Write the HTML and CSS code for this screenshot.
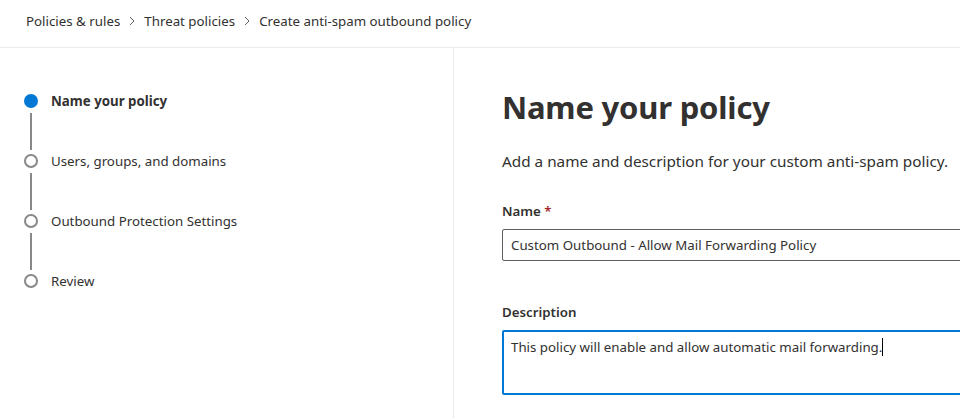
FILE: index.html
```html
<!DOCTYPE html>
<html>
<head>
<meta charset="utf-8">
<link rel="stylesheet" href="styles.css">
</head>
<body>
<header class="topbar">
  <nav class="crumbs">
    <span class="crumb">Policies &amp; rules</span>
    <svg class="chev" width="8" height="10" viewBox="0 0 8 10"><path d="M2 1l4 4-4 4" fill="none" stroke="#605e5c" stroke-width="1"/></svg>
    <span class="crumb">Threat policies</span>
    <svg class="chev" width="8" height="10" viewBox="0 0 8 10"><path d="M2 1l4 4-4 4" fill="none" stroke="#605e5c" stroke-width="1"/></svg>
    <span class="crumb current">Create anti-spam outbound policy</span>
  </nav>
</header>
<main class="layout">
  <aside class="steps">
    <div class="step active">
      <div class="marker"><span class="dot"></span><span class="rail"></span></div>
      <span class="step-label">Name your policy</span>
    </div>
    <div class="step">
      <div class="marker"><span class="dot"></span><span class="rail"></span></div>
      <span class="step-label">Users, groups, and domains</span>
    </div>
    <div class="step">
      <div class="marker"><span class="dot"></span><span class="rail"></span></div>
      <span class="step-label">Outbound Protection Settings</span>
    </div>
    <div class="step last">
      <div class="marker"><span class="dot"></span></div>
      <span class="step-label">Review</span>
    </div>
  </aside>
  <section class="content">
    <h1 class="title">Name your policy</h1>
    <p class="subtitle">Add a name and description for your custom anti-spam policy.</p>
    <label class="field-label">Name <span class="req">*</span></label>
    <div class="input">Custom Outbound - Allow Mail Forwarding Policy</div>
    <label class="field-label desc-label">Description</label>
    <div class="textarea">This policy will enable and allow automatic mail forwarding.<span class="caret"></span></div>
  </section>
</main>
</body>
</html>
```
FILE: styles.css
```css
* { box-sizing: border-box; }
html, body { margin: 0; padding: 0; }
body {
  width: 960px;
  height: 418px;
  overflow: hidden;
  background: #ffffff;
  font-family: "Noto Sans", "Open Sans", sans-serif;
  color: #323130;
}
.topbar {
  height: 48px;
  border-bottom: 1px solid #edebe9;
  display: flex;
  align-items: center;
  padding-left: 26px;
}
.crumbs {
  display: flex;
  align-items: center;
  gap: 8px;
  font-size: 13.3px;
  margin-top: -6px;
}
.crumb { color: #323130; }
.chev { display: block; }
.layout {
  display: flex;
  height: 370px;
}
.steps {
  width: 454px;
  flex: none;
  border-right: 1px solid #edebe9;
  padding: 46px 0 0 24px;
}
.step {
  display: flex;
  height: 60px;
}
.marker {
  width: 14px;
  display: flex;
  flex-direction: column;
  align-items: center;
  margin-right: 13px;
}
.dot {
  width: 14px;
  height: 14px;
  border-radius: 50%;
  border: 2px solid #8a8886;
  background: #fff;
  flex: none;
}
.step.active .dot {
  background: #0078d4;
  border-color: #0078d4;
}
.rail {
  width: 2px;
  flex: 1;
  background: #8a8886;
  margin: 5px 0 4px;
}
.step-label {
  font-size: 13.3px;
  line-height: 14px;
  color: #323130;
}
.step.active .step-label { font-weight: 700; }
.content {
  padding: 38px 0 0 48px;
  flex: 1;
  min-width: 0;
  overflow: hidden;
}
.title {
  margin: 0;
  font-size: 31px;
  font-weight: 700;
  line-height: 42px;
  color: #323130;
  letter-spacing: -0.2px;
}
.subtitle {
  margin: 22px 0 0;
  font-size: 15.3px;
  line-height: 22px;
  color: #323130;
}
.field-label {
  display: block;
  font-size: 13.3px;
  font-weight: 600;
  line-height: 20px;
  margin-top: 29px;
  color: #323130;
}
.req { color: #a4262c; }
.input {
  margin-top: 8px;
  height: 32px;
  width: 520px;
  border: 1px solid #605e5c;
  border-radius: 2px;
  padding: 0 8px;
  font-size: 13.3px;
  line-height: 30px;
  color: #323130;
}
.desc-label { margin-top: 41px; }
.textarea {
  margin-top: 8px;
  height: 65px;
  width: 520px;
  border: 2px solid #0078d4;
  border-radius: 2px;
  padding: 5px 7px;
  font-size: 13.3px;
  line-height: 20px;
  color: #323130;
}
.caret {
  display: inline-block;
  width: 1px;
  height: 18px;
  background: #000;
  vertical-align: -4px;
}
```
